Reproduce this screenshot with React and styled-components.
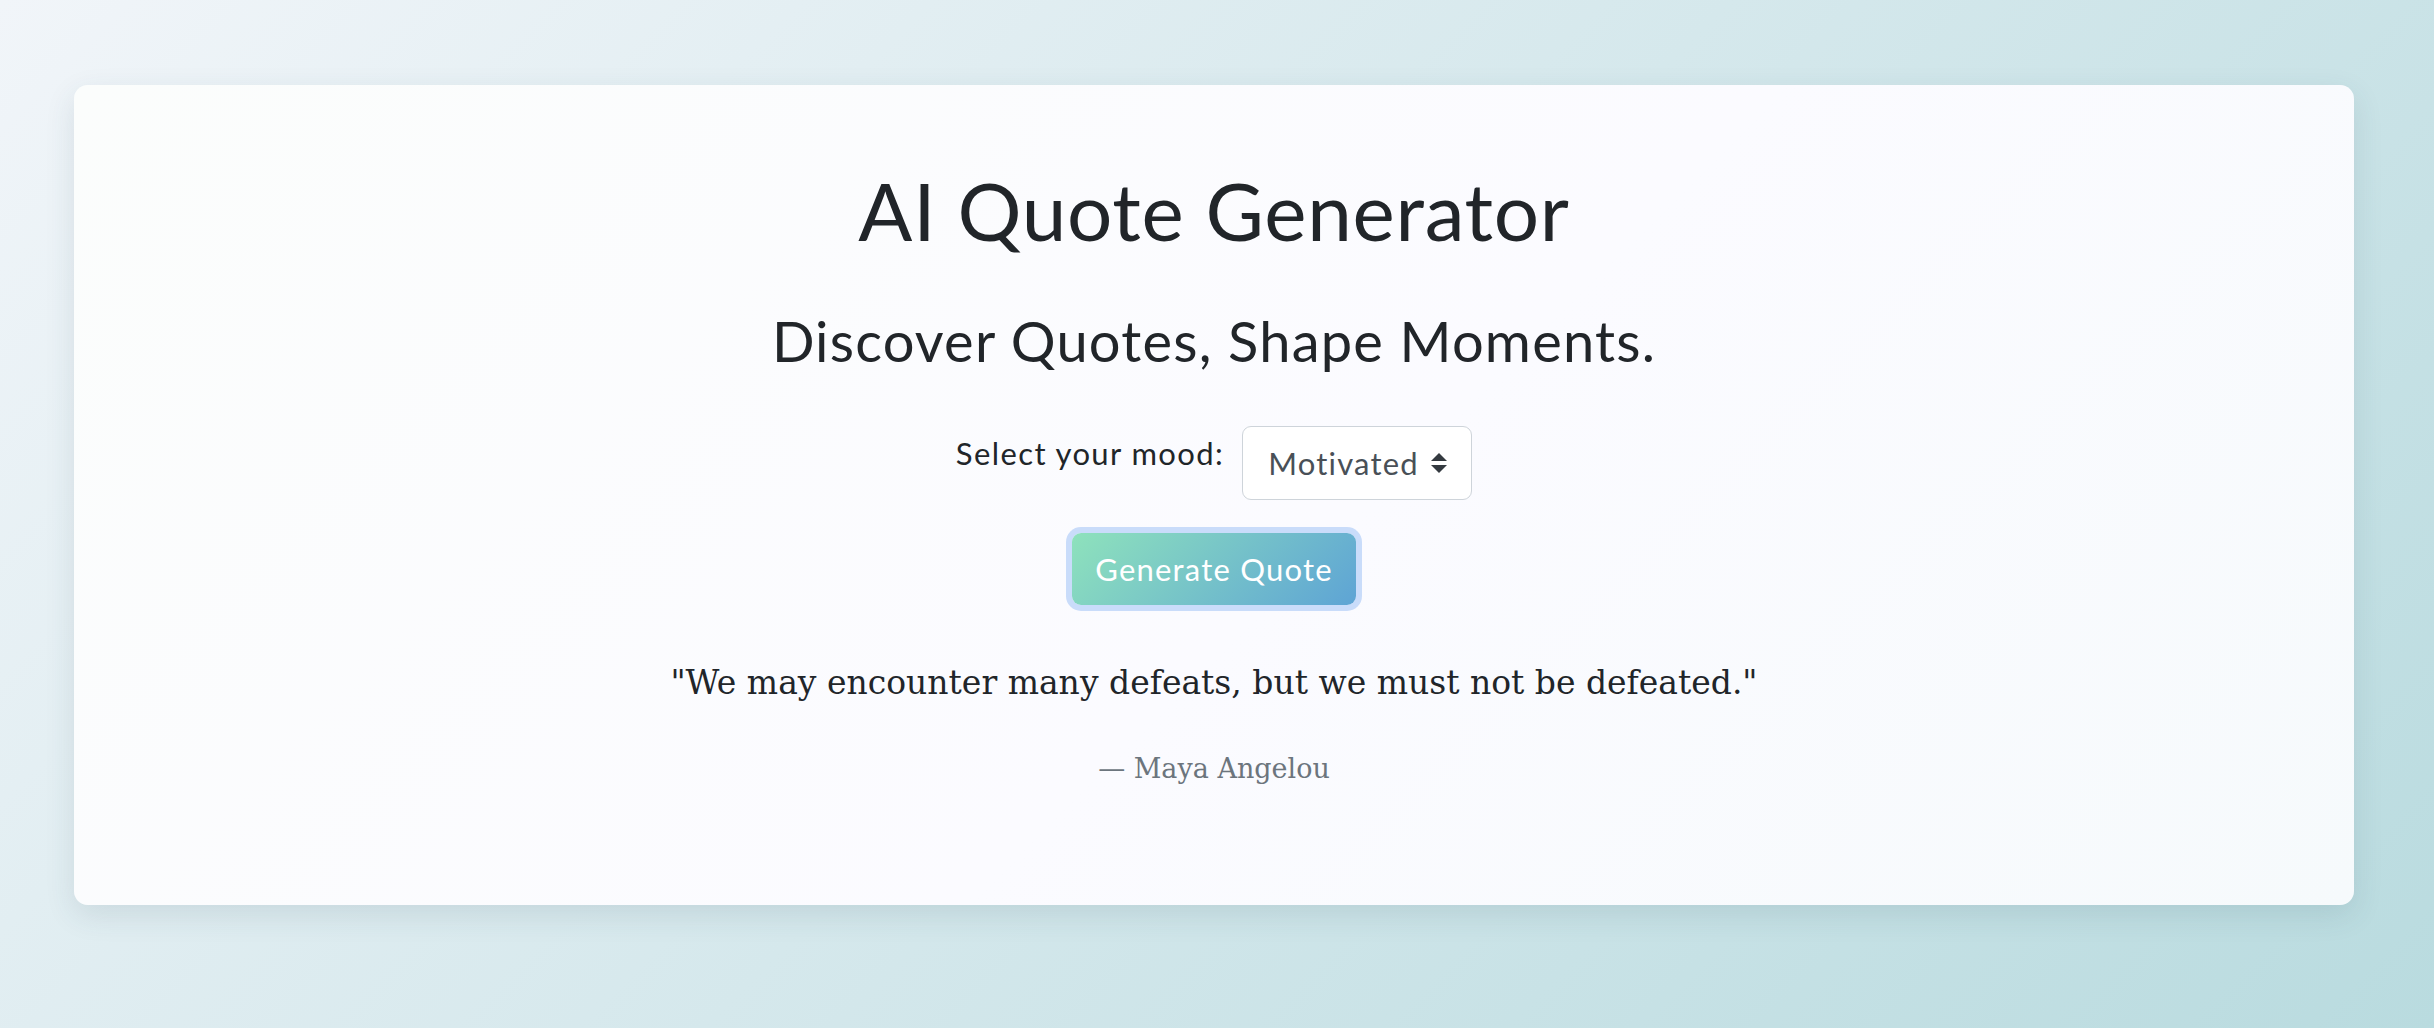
import React, { useState } from 'react';
import styled, { createGlobalStyle } from 'styled-components';

const GlobalStyle = createGlobalStyle`
  html, body {
    margin: 0;
    padding: 0;
  }
  body {
    min-height: 100vh;
    background: linear-gradient(135deg, #f1f5f9 0%, #b9dbdf 100%);
    font-family: 'Lato', 'Open Sans', sans-serif;
    color: #212529;
  }
`;

const Page = styled.div`
  min-height: 100vh;
  padding: 85px 80px 0 74px;
  box-sizing: border-box;
`;

const Card = styled.div`
  height: 820px;
  box-sizing: border-box;
  padding-top: 77px;
  display: flex;
  flex-direction: column;
  align-items: center;
  border-radius: 14px;
  background: linear-gradient(135deg, #fbfdfc 0%, #fbfbff 55%, #f6fafc 100%);
  box-shadow: 0 10px 30px rgba(40, 70, 90, 0.12);
`;

const Title = styled.h1`
  margin: 0;
  font-size: 80px;
  font-weight: 400;
  line-height: 1.2;
  letter-spacing: 0.7px;
  color: #212529;
`;

const Subtitle = styled.h2`
  margin: 49px 0 0;
  font-size: 56px;
  font-weight: 400;
  line-height: 1.2;
  letter-spacing: 1.2px;
  color: #212529;
`;

const MoodRow = styled.div`
  margin-top: 52px;
  display: flex;
  align-items: flex-start;
  gap: 18px;
`;

const Label = styled.label`
  margin-top: 5px;
  font-size: 31px;
  line-height: 1.45;
  letter-spacing: 1.4px;
  color: #212529;
`;

const SelectWrap = styled.div`
  position: relative;
  display: inline-flex;
`;

const Select = styled.select`
  appearance: none;
  -webkit-appearance: none;
  width: 230px;
  height: 74px;
  box-sizing: border-box;
  padding: 0 50px 0 25px;
  border: 1.5px solid #ced4da;
  border-radius: 9px;
  background: #fff;
  font-family: 'Lato', sans-serif;
  font-size: 31px;
  letter-spacing: 1.2px;
  color: #495057;
  outline: none;
`;

const Chevrons = styled.svg`
  position: absolute;
  right: 24px;
  top: 26px;
  width: 18px;
  height: 22px;
  pointer-events: none;
`;

const GenerateButton = styled.button`
  margin-top: 33px;
  width: 284px;
  height: 72px;
  border: none;
  border-radius: 9px;
  background: linear-gradient(135deg, #8ee2bc 0%, #5ea4d5 100%);
  box-shadow: 0 0 0 6px #c9dcfa;
  font-family: 'Lato', sans-serif;
  font-size: 31px;
  letter-spacing: 1.2px;
  color: #fff;
  cursor: pointer;
`;

const Quote = styled.p`
  margin: 55px 0 0;
  font-family: 'DejaVu Serif', serif;
  font-size: 33px;
  line-height: 1.4;
  color: #212529;
`;

const Author = styled.p`
  margin: 44px 0 0;
  font-family: 'DejaVu Serif', serif;
  font-size: 27px;
  line-height: 1.4;
  color: #6c757d;
`;

export default function App() {
  const [mood, setMood] = useState('motivated');

  return (
    <>
      <GlobalStyle />
      <Page>
        <Card>
          <Title>AI Quote Generator</Title>
          <Subtitle>Discover Quotes, Shape Moments.</Subtitle>
          <MoodRow>
            <Label htmlFor='mood'>Select your mood:</Label>
            <SelectWrap>
              <Select id='mood' value={mood} onChange={(e) => setMood(e.target.value)}>
                <option value='happy'>Happy</option>
                <option value='motivated'>Motivated</option>
                <option value='calm'>Calm</option>
                <option value='reflective'>Reflective</option>
              </Select>
              <Chevrons viewBox='0 0 18 22'>
                <path d='M9 1 L17 9 H1 Z' fill='#343a40' />
                <path d='M9 21 L17 13 H1 Z' fill='#343a40' />
              </Chevrons>
            </SelectWrap>
          </MoodRow>
          <GenerateButton type='button'>Generate Quote</GenerateButton>
          <Quote>"We may encounter many defeats, but we must not be defeated."</Quote>
          <Author>— Maya Angelou</Author>
        </Card>
      </Page>
    </>
  );
}
